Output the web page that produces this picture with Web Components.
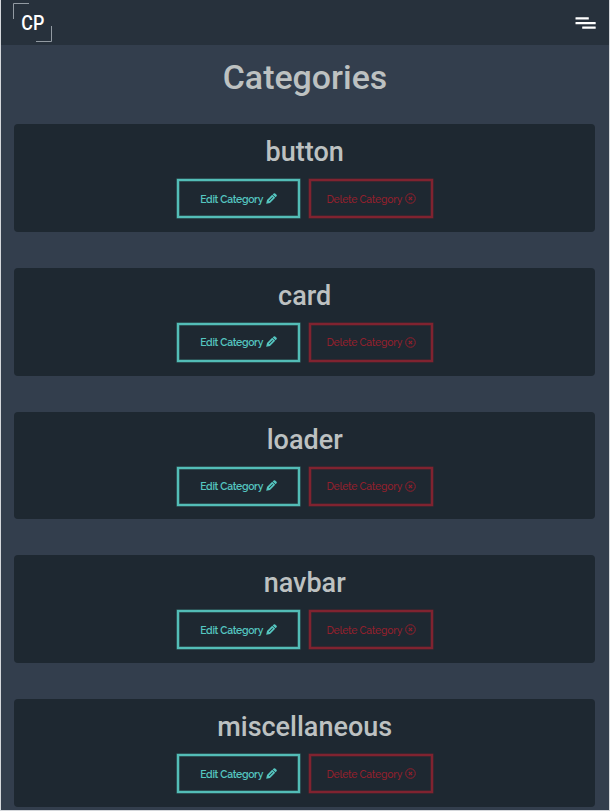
<!DOCTYPE html>
<html lang="en">
<head>
<meta charset="utf-8">
<title>Categories</title>
<style>
html,body{margin:0;height:811px;overflow:hidden;background:#d5d8dc}
body{font-family:Roboto,"Liberation Sans",sans-serif}
</style>
</head>
<body>
<category-page></category-page>
<script>
const define = (name, html) => customElements.define(name, class extends HTMLElement {
  constructor() {
    super();
    this.attachShadow({ mode: 'open' }).innerHTML = html;
  }
});

define('cp-logo', `
<style>
:host{display:block;width:40px;height:40px}
svg{display:block}
text{font-family:Roboto,sans-serif;font-weight:500;font-size:19.5px;fill:#fff}
</style>
<svg width="40" height="40" viewBox="0 0 40 40">
  <path d="M1.5 16V.5H17M24 38.5H39.5V23" fill="none" stroke="#929aa2" stroke-width="1"/>
  <text x="9.3" y="26.5" textLength="23" lengthAdjust="spacingAndGlyphs">CP</text>
</svg>`);

define('menu-icon', `
<style>:host{display:block;width:22px;height:14px}svg{display:block}</style>
<svg width="22" height="14" viewBox="0 0 22 14" fill="#fff">
  <rect x=".5" y="1.2" width="13.3" height="2.3" rx=".3"/>
  <rect x=".5" y="5.9" width="20.2" height="2.3" rx=".3"/>
  <rect x="7.2" y="10.5" width="13.5" height="2.3" rx=".3"/>
</svg>`);

define('top-bar', `
<style>
:host{display:flex;justify-content:space-between;align-items:flex-start;box-sizing:border-box;height:45px;padding:3px 12px 0 11px;background:#27313c}
menu-icon{margin-top:13px}
</style>
<cp-logo></cp-logo><menu-icon></menu-icon>`);

define('pencil-icon', `
<style>:host{display:block;width:11px;height:11px;margin-top:-1px}svg{display:block}</style>
<svg width="11" height="11" viewBox="0 0 11 11" fill="currentColor">
  <path fill-rule="evenodd" d="M.2 10.8 1 7 6.2 1.8 9.2 4.8 4 10ZM2.8 7.7 3.3 8.2 7 4.5 6.5 4Z"/>
  <path d="M6.7 1.4 7.7.5Q8.5-.1 9.2.5L10.5 1.8Q11.1 2.5 10.5 3.3L9.6 4.3Z"/>
</svg>`);

define('circle-x-icon', `
<style>:host{display:block;width:11px;height:11px}svg{display:block}</style>
<svg width="11" height="11" viewBox="0 0 11 11" fill="none" stroke="currentColor">
  <circle cx="5.5" cy="5.5" r="4.8" stroke-width="1"/>
  <path d="M3.8 3.8 7.2 7.2M7.2 3.8 3.8 7.2" stroke-width="1.2"/>
</svg>`);

define('outline-button', `
<style>
:host{display:block;width:123.6px;height:39px;color:var(--ink)}
button{all:unset;box-sizing:border-box;width:100%;height:100%;display:flex;align-items:center;justify-content:center;gap:2.5px;border:2px solid var(--tone);box-shadow:0 0 0 .5px var(--edge),inset 0 0 0 .5px var(--edge);font:var(--weight,500) 10.4px/14px Raleway,Lato,sans-serif;letter-spacing:var(--track,0);white-space:nowrap}
</style>
<button><slot></slot><slot name="icon"></slot></button>`);

define('category-card', `
<style>
:host{display:flex;flex-direction:column;align-items:center;box-sizing:border-box;height:107.8px;background:#1e2831;border-radius:4px;padding-top:12px}
h2{margin:0;font-weight:500;font-size:27px;line-height:32px;color:#bdc1c1}
.actions{display:flex;gap:9px;margin-top:11px}
.edit{--ink:#55c6c0;--tone:#53bdb7;--edge:#397a79;--weight:650;--track:-.32px}
.delete{--ink:#93202d;--tone:#802330;--edge:#5b222c;--weight:550;--track:-.27px}
</style>
<h2><slot></slot></h2>
<div class="actions">
  <outline-button class="edit">Edit Category<pencil-icon slot="icon"></pencil-icon></outline-button>
  <outline-button class="delete">Delete Category<circle-x-icon slot="icon"></circle-x-icon></outline-button>
</div>`);

define('category-page', `
<style>
:host{display:block;box-sizing:border-box;width:608px;height:810px;margin-left:1px;background:#333e4d;overflow:hidden}
h1{margin:0;padding-top:11px;height:68px;box-sizing:content-box;font-weight:500;font-size:33.9px;line-height:44px;text-align:center;color:#bdc1c1}
main{display:flex;flex-direction:column;gap:36px;padding:0 14px 0 13.4px}
category-card{flex:none}
</style>
<top-bar></top-bar>
<h1>Categories</h1>
<main>
  <category-card>button</category-card>
  <category-card>card</category-card>
  <category-card>loader</category-card>
  <category-card>navbar</category-card>
  <category-card>miscellaneous</category-card>
</main>`);
</script>
</body>
</html>
